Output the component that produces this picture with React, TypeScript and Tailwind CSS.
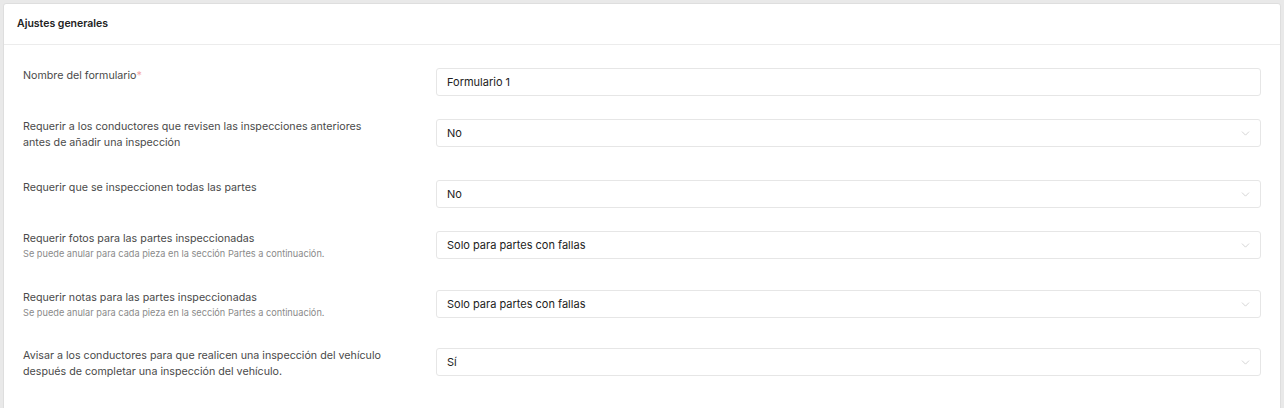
import { ChevronDown } from 'lucide-react';

type Row = {
  label: string;
  sub?: string;
  value: string;
  select: boolean;
  required?: boolean;
  height: string;
};

const rows: Row[] = [
  { label: 'Nombre del formulario', value: 'Formulario 1', select: false, required: true, height: 'h-[51px]' },
  {
    label: 'Requerir a los conductores que revisen las inspecciones anteriores antes de añadir una inspección',
    value: 'No',
    select: true,
    height: 'h-[61px]',
  },
  { label: 'Requerir que se inspeccionen todas las partes', value: 'No', select: true, height: 'h-[51px]' },
  {
    label: 'Requerir fotos para las partes inspeccionadas',
    sub: 'Se puede anular para cada pieza en la sección Partes a continuación.',
    value: 'Solo para partes con fallas',
    select: true,
    height: 'h-[59px]',
  },
  {
    label: 'Requerir notas para las partes inspeccionadas',
    sub: 'Se puede anular para cada pieza en la sección Partes a continuación.',
    value: 'Solo para partes con fallas',
    select: true,
    height: 'h-[58px]',
  },
  {
    label: 'Avisar a los conductores para que realicen una inspección del vehículo después de completar una inspección del vehículo.',
    value: 'Sí',
    select: true,
    height: 'h-[60px]',
  },
];

export default function App() {
  return (
    <div className="min-h-[408px] bg-[#e9e9e9] px-[3px] pt-[3px] font-['Inter','Liberation_Sans',sans-serif]">
      <div className="min-h-[405px] bg-white border border-[#dedede] rounded-t-[3px]">
        {/* Header */}
        <div className="h-[41px] flex items-center px-[13px] border-b border-[#ececec]">
          <span className="text-[10.5px] font-semibold text-[#222]">Ajustes generales</span>
        </div>

        {/* Settings rows */}
        <div className="pt-[23px] px-[19px]">
          {rows.map((row) => (
            <div key={row.label} className={`grid grid-cols-[413px_1fr] items-start ${row.height}`}>
              <div className="pr-[49px]">
                <div className="text-[10.7px] leading-[16px] text-[#4a4a4a]">
                  {row.label}
                  {row.required && <span className="text-[#f3a5a5]">*</span>}
                </div>
                {row.sub && (
                  <div className="text-[9.2px] leading-[13px] text-[#8a8a8a]">{row.sub}</div>
                )}
              </div>
              <div className="h-[28px] flex items-center justify-between border border-[#e6e6e6] rounded-[3px] pl-[10px] pr-[8px]">
                <span className="text-[11px] text-[#222]">{row.value}</span>
                {row.select && <ChevronDown className="w-[13px] h-[13px] text-[#c8c8c8]" strokeWidth={1.4} />}
              </div>
            </div>
          ))}
        </div>
      </div>
    </div>
  );
}
